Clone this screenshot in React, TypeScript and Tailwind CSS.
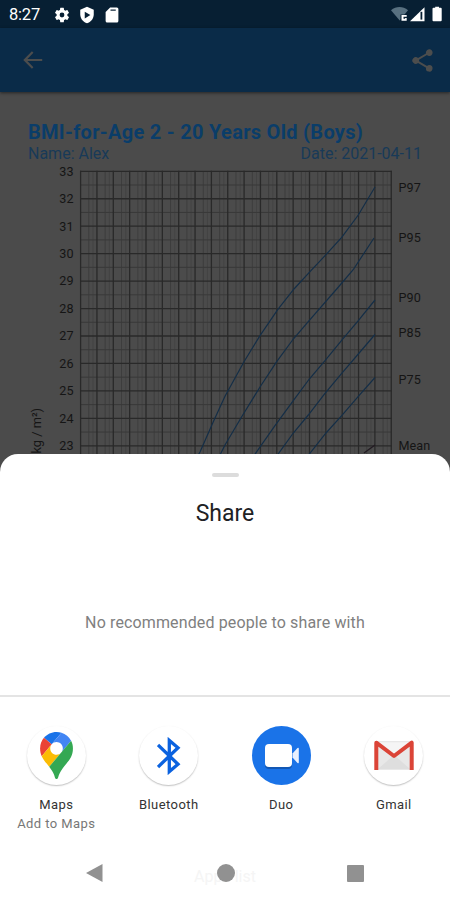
import type { ReactNode } from "react"

const MAJOR_COLS = Array.from({ length: 20 }, (_, i) => 80.6 + i * 16.35)
const MAJOR_ROWS = Array.from({ length: 11 }, (_, i) => 79.3 + i * 27.45)

const Y_LABELS = [33, 32, 31, 30, 29, 28, 27, 26, 25, 24, 23]

const CURVES = [
  "196,367 200,360 213.3,329.7 225,304.3 244,269.7 260,243.7 277.7,217.7 294,197 310,179.7 326,162.7 341.7,145.3 358.3,123 375,95",
  "219,365 225,353 241.7,324.7 260,295 276.7,269.7 293.3,247 310,227.7 336.7,197 353,178 374,146",
  "253,365 275,333.7 293.3,308.7 309.3,287 325,268.7 343.3,246.3 358.3,228.7 375,208",
  "276,365 293.3,341 308.3,323 325,301.3 341.7,281.3 358.3,262 375,242.5",
  "307,365 326,341 341.7,323.7 358.3,304.3 375,285.5",
]

const PERCENTILES = [
  { label: "P97", y: 100 },
  { label: "P95", y: 149.5 },
  { label: "P90", y: 210 },
  { label: "P85", y: 245.4 },
  { label: "P75", y: 292 },
  { label: "Mean", y: 358.4 },
]

function StatusBar() {
  return (
    <div className="flex h-7 items-center bg-[#071f33] pl-[9px] pr-[7px] text-white">
      <span className="w-[43.5px] pt-0.5 text-[16.5px] leading-7 tracking-[-0.2px]">8:27</span>
      <svg className="mt-px size-[18px]" viewBox="0 0 24 24" fill="currentColor">
        <path d="M19.14 12.94c.04-.3.06-.61.06-.94s-.02-.64-.07-.94l2.03-1.58a.5.5 0 0 0 .12-.61l-1.92-3.32a.49.49 0 0 0-.59-.22l-2.39.96a7 7 0 0 0-1.62-.94l-.36-2.54a.48.48 0 0 0-.48-.41h-3.84a.48.48 0 0 0-.47.41l-.36 2.54c-.59.24-1.13.57-1.62.94l-2.39-.96a.48.48 0 0 0-.59.22L2.74 8.87a.48.48 0 0 0 .12.61l2.03 1.58a6 6 0 0 0 0 1.88l-2.03 1.58a.49.49 0 0 0-.12.61l1.92 3.32c.12.22.37.29.59.22l2.39-.96c.5.38 1.03.7 1.62.94l.36 2.54c.05.24.24.41.48.41h3.84c.24 0 .44-.17.47-.41l.36-2.54a7 7 0 0 0 1.62-.94l2.39.96c.22.08.47 0 .59-.22l1.92-3.32a.48.48 0 0 0-.12-.61zM12 15.2a3.2 3.2 0 1 1 0-6.4 3.2 3.2 0 0 1 0 6.4" />
      </svg>
      <svg className="ml-[7px] mt-px size-[18px]" viewBox="0 0 24 24" fill="currentColor">
        <path d="M12 1 3 5v6c0 5.55 3.84 10.74 9 12 5.16-1.26 9-6.45 9-12V5z" />
        <path d="m9 7.5 7.5 4.5L9 16.5z" fill="#071f33" />
      </svg>
      <svg className="ml-[7px] mt-px size-[18px]" viewBox="0 0 24 24" fill="currentColor">
        <path d="M18.5 2h-9L3.5 8v12c0 1.1.9 2 2 2h13c1.1 0 2-.9 2-2V4a2 2 0 0 0-2-2" />
        <path d="M10 5.5h7" stroke="#071f33" strokeWidth="1.6" />
      </svg>
      <svg className="ml-auto mt-px h-[18px] w-[52px]" viewBox="0 0 52 18" fill="currentColor">
        <path d="M0 4.2C5-.2 12-.2 17 4.2L8.7 14.5z" fill="#587080" />
        <path d="M9.5 8.5h7v7h-7z" fill="#071f33" />
        <path d="M10.5 9h5.2v1.7h-3.2v2h1.6v-.8h1.6v2.8h-5.2z" />
        <path d="M33.5 1.2v14H19z" />
        <path d="M29.5 5.8h1.8v7.8h-1.8z" fill="#071f33" />
        <path d="M42.5 1.8h1.7V.8H48v1h1.7a1 1 0 0 1 1 1v11.5a1 1 0 0 1-1 1h-7.2a1 1 0 0 1-1-1V2.8a1 1 0 0 1 1-1" />
      </svg>
    </div>
  )
}

function AppBar() {
  return (
    <div className="flex h-16 items-center justify-between bg-[#0a2b48] pl-5 pr-3.5 text-[#4c4d4d] shadow-[0_1px_3px_rgba(0,0,0,0.5)]">
      <svg className="size-[26px]" viewBox="0 0 24 24" fill="currentColor">
        <path d="M20.5 11H6.83l5.59-5.59L11 4l-8 8 8 8 1.41-1.41L6.83 13H20.5z" />
      </svg>
      <svg className="size-[27px]" viewBox="0 0 24 24" fill="currentColor">
        <path d="M18 16.08c-.76 0-1.44.3-1.96.77L8.91 12.7a3.3 3.3 0 0 0 0-1.4l7.05-4.11A2.99 2.99 0 1 0 15 5c0 .24.04.47.09.7L8.04 9.81a3 3 0 1 0 0 4.38l7.12 4.16a2.92 2.92 0 1 0 2.84-2.27" />
      </svg>
    </div>
  )
}

function GrowthChart() {
  return (
    <div className="h-[362px] overflow-hidden">
      <div className="px-7 pt-[29px] text-[#0a3d69]">
        <h1 className="text-[20px] font-bold leading-[22px] tracking-[0.29px]">BMI-for-Age 2 - 20 Years Old (Boys)</h1>
        <div className="flex justify-between pt-px text-[16px] leading-[19px] text-[#183a58]">
          <span>Name: Alex</span>
          <span>Date: 2021-04-11</span>
        </div>
      </div>
      <svg className="-mt-[71px] block h-[363px] w-[450px]" viewBox="0 0 450 363" fill="none">
        <g stroke="#3d3d3d">
          {MAJOR_COLS.slice(0, -1).map((x) => (
            <path key={x} d={`M${x + 8.2} 79V363`} />
          ))}
          {MAJOR_COLS.slice(0, -1).map((x) => (
            <path key={x} d={`M${x + 12.4} 79V363`} stroke="#434343" />
          ))}
          {MAJOR_ROWS.map((y) => (
            <path key={y} d={`M80.6 ${y + 13.7}H391.3`} stroke="#393939" />
          ))}
        </g>
        <g stroke="#292929" strokeWidth="1.3">
          {MAJOR_COLS.map((x) => (
            <path key={x} d={`M${x} 78.7V363`} />
          ))}
          {MAJOR_ROWS.map((y) => (
            <path key={y} d={`M80 ${y}H391.9`} />
          ))}
        </g>
        <g stroke="#142e47" strokeWidth="1.2">
          {CURVES.map((points) => (
            <polyline key={points} points={points} />
          ))}
          <path d="M364 361 375 353" stroke="#221b22" />
        </g>
        <g fill="#151515" fontSize="12.6">
          {Y_LABELS.map((n, i) => (
            <text key={n} x="73.5" y={83.6 + i * 27.45} textAnchor="end">{n}</text>
          ))}
          {PERCENTILES.map((p) => (
            <text key={p.label} x="398.5" y={p.y} letterSpacing="0.1">{p.label}</text>
          ))}
          <text transform="translate(41.3 361.5) rotate(-90)" fontSize="12.8">kg / m²)</text>
        </g>
      </svg>
    </div>
  )
}

function ShareTarget({ label, sub, children }: { label: string; sub?: string; children: ReactNode }) {
  return (
    <div className="flex flex-1 flex-col items-center">
      {children}
      <span className="mt-[10px] text-[13px] leading-[19px] tracking-[0.42px] text-[#333]">{label}</span>
      {sub && <span className="text-[13px] leading-[19px] tracking-[0.42px] text-[#777]">{sub}</span>}
    </div>
  )
}

function MapsIcon() {
  return (
    <svg viewBox="0 0 92.3 132.3" className="h-[47px] w-[33px]">
      <path fill="#1a73e8" d="M60.2 2.2C55.8.8 51 0 46.1 0 32 0 19.3 6.4 10.8 16.5l21.8 18.3z" />
      <path fill="#ea4335" d="M10.8 16.5C4.1 24.5 0 34.9 0 46.1c0 8.7 1.7 15.7 4.6 22l28-33.3z" />
      <path fill="#4285f4" d="M46.2 28.5c9.8 0 17.7 7.9 17.7 17.7 0 4.3-1.6 8.3-4.2 11.4l27.5-32.7C81.5 14 71.8 5.8 60.2 2.2L32.6 34.8c3.3-3.8 8.1-6.3 13.6-6.3" />
      <path fill="#fbbc04" d="M46.2 63.8c-9.8 0-17.7-7.9-17.7-17.7 0-4.3 1.5-8.3 4.1-11.3l-28 33.3c4.8 10.6 12.8 19.2 21 29.9l34.1-40.5c-3.3 3.9-8.1 6.3-13.5 6.3" />
      <path fill="#34a853" d="M59.1 109.2c15.4-24.1 33.3-35 33.3-63 0-7.7-1.9-14.9-5.2-21.3L25.6 98c2.6 3.4 5.3 7.3 7.9 11.3 9.4 14.5 6.8 23.1 12.8 23.1s3.4-8.7 12.8-23.2" />
    </svg>
  )
}

const CIRCLE = "flex size-[59px] items-center justify-center rounded-full bg-white shadow-[0_1px_1.5px_rgba(0,0,0,0.25)]"

function ShareSheet() {
  return (
    <div className="relative flex h-[446px] flex-col rounded-t-[18px] bg-white">
      <div className="mx-auto mt-[19px] h-1 w-[27px] shrink-0 rounded-full bg-[#dcdcdc]" />
      <h2 className="mt-[23px] text-center text-[23px] leading-7 text-[#202124]">Share</h2>
      <p className="mt-[83px] text-center text-[16px] leading-6 tracking-[0.13px] text-[#808080]">No recommended people to share with</p>
      <div className="mt-[60px] h-0.5 bg-[#e4e4e4]" />
      <div className="mt-[29px] flex">
        <ShareTarget label="Maps" sub="Add to Maps">
          <div className={CIRCLE}>
            <MapsIcon />
          </div>
        </ShareTarget>
        <ShareTarget label="Bluetooth">
          <div className={CIRCLE}>
            <svg className="h-[38px] w-[24px]" viewBox="0 0 24 38" fill="none" stroke="#0b62df" strokeWidth="3.3">
              <path d="m1 8 20 19.2-8.7 7.4V3.4l8.7 7.4L1 30" />
            </svg>
          </div>
        </ShareTarget>
        <ShareTarget label="Duo">
          <div className="flex size-[59px] items-center justify-center rounded-full bg-[#1a73e8]">
            <svg className="h-[28px] w-[36px]" viewBox="0 0 36 28">
              <path d="M6 3h19a4 4 0 0 1 4 4v16a4 4 0 0 1-4 4H6a4 4 0 0 1-4-4V7a4 4 0 0 1 4-4" fill="#1257b4" />
              <rect x="2" y="2" width="27" height="23" rx="4" fill="#fff" />
              <path d="m29.5 11.5 5-5.5q1.3-1 1.3.8v13.4q0 1.8-1.3.8l-5-5.5z" fill="#e8f0fe" />
            </svg>
          </div>
        </ShareTarget>
        <ShareTarget label="Gmail">
          <div className={CIRCLE}>
            <svg className="h-[31px] w-[40px]" viewBox="0 0 40 31">
              <rect x="1" y="1" width="38" height="29" rx="2" fill="#e8e8e8" />
              <path d="M4 29 20 15l16 14" fill="#dedede" />
              <path d="M2.3 2.3 20 16 37.7 2.3" fill="#f5f5f5" />
              <path d="M2.3 30V2.7L20 16 37.7 2.7V30" fill="none" stroke="#db4437" strokeWidth="4" strokeLinejoin="round" />
            </svg>
          </div>
        </ShareTarget>
      </div>
      <div className="absolute inset-x-0 bottom-[13px] text-center text-[16px] leading-5 text-[#f5f5f5]">Apps list</div>
      <div className="absolute bottom-[18px] left-[86px] right-[86px] flex items-center justify-between text-[#919191]">
        <svg className="size-[18px]" viewBox="0 0 18 18" fill="currentColor">
          <path d="M16.5 0v18L0 9z" />
        </svg>
        <div className="size-[18px] rounded-full bg-[#919191]" />
        <div className="size-[17px] rounded-[1px] bg-[#919191]" />
      </div>
    </div>
  )
}

export default function App() {
  return (
    <div className="h-[900px] w-[450px] overflow-hidden bg-[#4b4b4b] font-[Roboto,sans-serif]">
      <StatusBar />
      <AppBar />
      <GrowthChart />
      <ShareSheet />
    </div>
  )
}
